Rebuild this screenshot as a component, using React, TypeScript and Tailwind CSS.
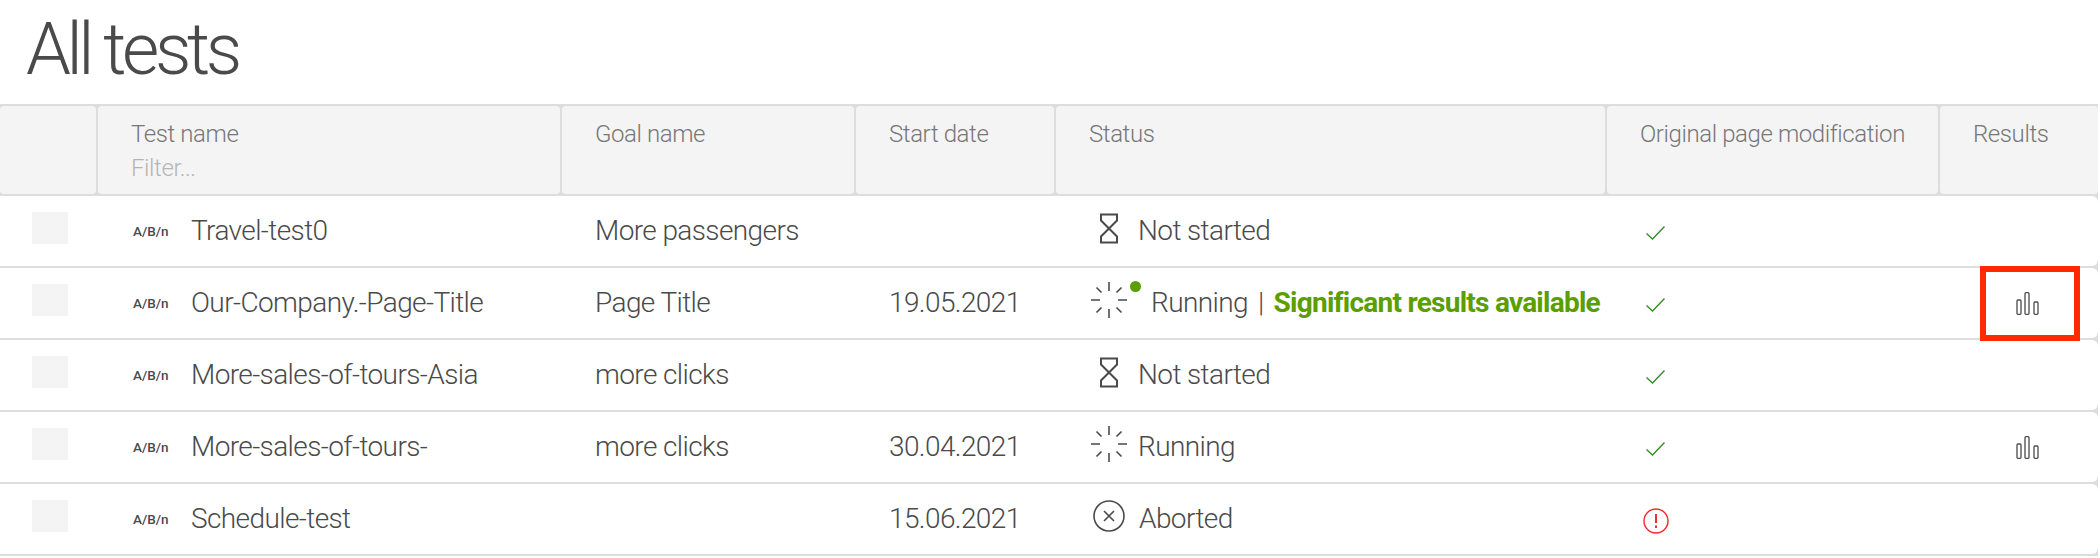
const FONT = "font-['Roboto',sans-serif]";

type Status = "waiting" | "running" | "aborted";

const ROWS: {
  name: string;
  goal: string;
  date: string;
  status: Status;
  label: string;
  significant?: boolean;
  error?: boolean;
  results?: boolean;
}[] = [
  { name: "Travel-test0", goal: "More passengers", date: "", status: "waiting", label: "Not started" },
  { name: "Our-Company.-Page-Title", goal: "Page Title", date: "19.05.2021", status: "running", label: "Running", significant: true, results: true },
  { name: "More-sales-of-tours-Asia", goal: "more clicks", date: "", status: "waiting", label: "Not started" },
  { name: "More-sales-of-tours-", goal: "more clicks", date: "30.04.2021", status: "running", label: "Running", results: true },
  { name: "Schedule-test", goal: "", date: "15.06.2021", status: "aborted", label: "Aborted", error: true },
];

const COLS = "grid grid-cols-[98px_464px_294px_200px_551px_333px_158px]";

function Hourglass() {
  return (
    <svg width="20" height="31" viewBox="0 0 20 31" fill="none" stroke="#4a4a4a" strokeWidth="2" className="mb-[6px] ml-[9px] mr-[19px] shrink-0">
      <path d="M2 1.5h16v6L2 23.5v6h16v-6L2 7.5z" />
    </svg>
  );
}

function Spinner() {
  return (
    <svg width="36" height="36" viewBox="0 0 36 36" fill="none" stroke="#4a4a4a" strokeWidth="1.6" className="shrink-0">
      <path d="M18 0v9M18 27v9M0 18h9M27 18h9M5.5 5.5l5 5M25.5 25.5l5 5M30.5 5.5l-5 5M10.5 25.5l-5 5" />
    </svg>
  );
}

function Aborted() {
  return (
    <svg width="32" height="32" viewBox="0 0 32 32" fill="none" stroke="#4a4a4a" strokeWidth="1.6" className="mb-[6px] ml-[3px] mr-[14px] shrink-0">
      <circle cx="16" cy="16" r="15" />
      <path d="M11 11l10 10M21 11L11 21" />
    </svg>
  );
}

function Check() {
  return (
    <svg width="19" height="14" viewBox="0 0 19 14" fill="none" stroke="#2e8b1f" strokeWidth="1.3" className="mt-[4px]">
      <path d="M.5 7.5l6 5.5L18.5 .5" />
    </svg>
  );
}

function Warning() {
  return (
    <svg width="26" height="26" viewBox="0 0 26 26" fill="none" stroke="#f5282d" strokeWidth="1.4" className="mt-[3px]">
      <circle cx="13" cy="13" r="12" />
      <path d="M13 6v9M13 17.5v2.5" strokeWidth="2" />
    </svg>
  );
}

function Bars() {
  return (
    <svg width="23" height="23" viewBox="0 0 23 23" fill="none" stroke="#4a4a4a" strokeWidth="1.3">
      <rect x="1" y="8" width="4" height="14.3" rx="1" />
      <rect x="9" y=".7" width="4" height="21.6" rx="1" />
      <rect x="18" y="10" width="4" height="12.3" rx="1" />
    </svg>
  );
}

function HeadCell({ label, filter }: { label?: string; filter?: boolean }) {
  return (
    <div className="mr-[2px] rounded-[4px] bg-[#f4f4f4] pl-[33px] pt-[12px] text-[24px] leading-[32px] font-light tracking-[-0.4px] whitespace-nowrap text-[#777] last:mr-0">
      {label}
      {filter && <div className="mt-[2px] text-[#b4b4b4]">Filter...</div>}
    </div>
  );
}

export default function App() {
  return (
    <div className={`${FONT} h-[558px] w-[2100px] overflow-hidden bg-white text-[#4a4a4a]`}>
      <h1 className="h-[104px] pl-[26px] pt-[3px] text-[72px] leading-[94px] font-light tracking-[-4.4px]">All tests</h1>

      <div className="w-[2098px] bg-[#dddddd] py-[2px]">
        <div className={`${COLS} h-[88px]`}>
          <HeadCell />
          <HeadCell label="Test name" filter />
          <HeadCell label="Goal name" />
          <HeadCell label="Start date" />
          <HeadCell label="Status" />
          <HeadCell label="Original page modification" />
          <HeadCell label="Results" />
        </div>
      </div>

      {ROWS.map((row) => (
        <div key={row.name} className="w-[2098px] bg-[#dddddd] pb-[2px]">
          <div className={`${COLS} h-[70px] items-center rounded-r-[6px] bg-white text-[28px] font-light tracking-[-0.6px]`}>
            <div className="pl-[32px]">
              <div className="mb-[6px] h-[32px] w-[36px] bg-[#f4f4f4]" />
            </div>
            <div className="flex items-center pl-[35px] whitespace-nowrap">
              <span className="w-[58px] text-[13.5px] font-medium tracking-normal">A/B/n</span>
              {row.name}
            </div>
            <div className="pl-[33px] whitespace-nowrap">{row.goal}</div>
            <div className="pl-[33px] whitespace-nowrap">{row.date}</div>
            <div className="flex items-center pl-[34px] whitespace-nowrap">
              {row.status === "waiting" && <Hourglass />}
              {row.status === "aborted" && <Aborted />}
              {row.status === "running" && (
                <div className={`relative mb-[6px] ml-[1px] shrink-0 ${row.significant ? "mr-[24px]" : "mr-[11px]"}`}>
                  <Spinner />
                  {row.significant && <span className="absolute right-[-14px] top-[-1px] size-[11px] rounded-full bg-[#5a9e00]" />}
                </div>
              )}
              {row.label}
              {row.significant && (
                <>
                  <span className="mx-[10px]">|</span>
                  <span className="font-bold tracking-[-0.75px] text-[#5a9e00]">Significant results available</span>
                </>
              )}
            </div>
            <div className="flex pl-[39px]">{row.error ? <span className="ml-[-3px]"><Warning /></span> : <Check />}</div>
            <div className="flex pl-[76px]">
              {row.results && (
                <span className={row.significant ? "ml-[-36px] -my-[3px] box-border flex h-[75px] w-[100px] items-center justify-center border-[6px] border-[#ff2a00] pr-[6px]" : ""}>
                  <Bars />
                </span>
              )}
            </div>
          </div>
        </div>
      ))}
    </div>
  );
}
